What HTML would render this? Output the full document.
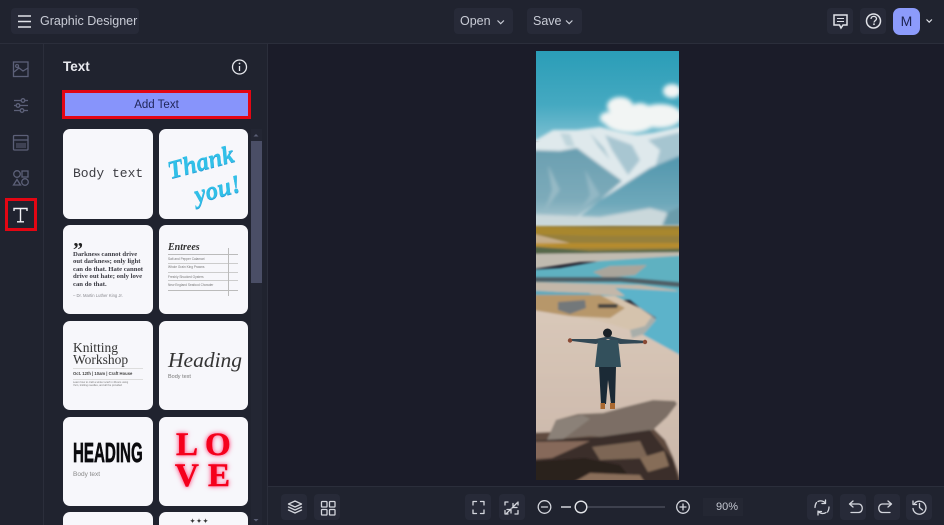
<!DOCTYPE html>
<html><head><meta charset="utf-8">
<style>
*{box-sizing:border-box}
html,body{margin:0;padding:0;width:944px;height:525px;overflow:hidden;background:#1b1c29;font-family:"Liberation Sans",sans-serif}
#root{position:absolute;left:0;top:0;width:944px;height:525px;overflow:hidden;background:#1b1c29}
.a{position:absolute}
.top{left:0;top:0;width:944px;height:44px;background:#20232f;border-bottom:1px solid #2b2e3b}
.rail{left:0;top:44px;width:44px;height:481px;background:#20232f;border-right:1px solid #2b2e3b}
.panel{left:44px;top:44px;width:224px;height:481px;background:#20232f;border-right:1px solid #2b2e3b}
.bot{left:268px;top:486px;width:676px;height:39px;background:#20232f;border-top:1px solid #2b2e3b}
.btn{background:#272a38;border-radius:4px;color:#c9ccd6;font-size:12.5px;line-height:26px}
.ib{background:#272a38;border-radius:4px;width:26px;height:26px}
.card{background:#f7f7fb;border-radius:7px;overflow:hidden}
svg{position:absolute;left:0;top:0;overflow:visible}
.t{position:absolute;white-space:nowrap;color:#333}
.lv{position:absolute;font:bold 33px/33px "Liberation Serif",serif;color:#f5001c;-webkit-text-stroke:.5px #f5001c;text-shadow:0 0 6px #ff5a8c,0 0 3px #ff6f9a}
</style></head><body><div id="root">
<div class="a top"></div><div class="a rail"></div><div class="a panel"></div><div class="a bot"></div>

<div class="a btn" style="left:11px;top:8px;width:128px;height:26px;padding-left:29px;font-size:12.5px">Graphic Designer</div>
<div class="a btn" style="left:454px;top:8px;width:59px;height:26px;padding-left:6px">Open</div>
<div class="a btn" style="left:527px;top:8px;width:55px;height:26px;padding-left:6px">Save</div>
<div class="a ib" style="left:827px;top:8px"></div>
<div class="a ib" style="left:860px;top:8px"></div>
<div class="a" style="left:893px;top:8px;width:27px;height:27px;border-radius:7px;background:#8c9bfb;color:#1d2450;font-size:14px;line-height:27px;text-align:center">M</div>

<div class="a" style="left:63px;top:59px;color:#e8e9ee;font-size:13.5px;font-weight:bold">Text</div>
<div class="a" style="left:62px;top:90px;width:189px;height:29px;background:#8794fb;border:3px solid #e30613;color:#1f2558;font-size:11.5px;line-height:25px;text-align:center">Add Text</div>
<div class="a" style="left:5px;top:198px;width:32px;height:33px;border:3px solid #e30613"></div>

<div class="a" style="left:251px;top:129px;width:11px;height:396px;background:#232633"></div>
<div class="a" style="left:251px;top:141px;width:11px;height:142px;background:#4a4e66"></div>

<!-- cards -->
<div class="a card" style="left:63px;top:129px;width:90px;height:90px"><div class="t" style="left:10px;top:37px;font:13px 'Liberation Mono',monospace;color:#3c3c42">Body text</div></div>
<div class="a card" style="left:159px;top:129px;width:89px;height:90px">
<div class="t" style="left:8px;top:20px;font:italic bold 25px 'Liberation Serif',serif;color:#31c0e8;transform:rotate(-15deg);text-shadow:0 1px 0 #2aa0d8">Thank</div>
<div class="t" style="left:35px;top:47px;font:italic bold 25px 'Liberation Serif',serif;color:#31c0e8;transform:rotate(-15deg);text-shadow:0 1px 0 #2aa0d8">you!</div></div>
<div class="a card" style="left:63px;top:225px;width:90px;height:89px">
<div class="t" style="left:10px;top:15px;font:bold 20px/20px 'Liberation Serif',serif;color:#222">”</div>
<div class="t" style="left:10px;top:26px;font:bold 6.7px/7.4px 'Liberation Serif',serif;color:#3c3c44">Darkness cannot drive<br>out darkness; only light<br>can do that. Hate cannot<br>drive out hate; only love<br>can do that.</div>
<div class="t" style="left:10px;top:68px;font:4.2px 'Liberation Sans',sans-serif;color:#8a8a90">– Dr. Martin Luther King Jr.</div></div>
<div class="a card" style="left:159px;top:225px;width:89px;height:89px">
<div class="t" style="left:9px;top:17px;font:italic bold 10px 'Liberation Serif',serif;color:#333">Entrees</div>
<div class="a" style="left:9px;top:29px;width:70px;height:1px;background:#bbb"></div>
<div class="a" style="left:9px;top:38px;width:70px;height:1px;background:#ccc"></div>
<div class="a" style="left:9px;top:47px;width:70px;height:1px;background:#ccc"></div>
<div class="a" style="left:9px;top:55px;width:70px;height:1px;background:#ccc"></div>
<div class="a" style="left:9px;top:65px;width:70px;height:1px;background:#bbb"></div>
<div class="a" style="left:69px;top:23px;width:1px;height:48px;background:#bbb"></div>
<div class="t" style="left:9px;top:32px;font:3.2px 'Liberation Sans',sans-serif;color:#777">Salt and Pepper Calamari</div>
<div class="t" style="left:9px;top:40px;font:3.2px 'Liberation Sans',sans-serif;color:#777">Whole Grain King Prawns</div>
<div class="t" style="left:9px;top:50px;font:3.2px 'Liberation Sans',sans-serif;color:#777">Freshly Shucked Oysters</div>
<div class="t" style="left:9px;top:58px;font:3.2px 'Liberation Sans',sans-serif;color:#777">New England Seafood Chowder</div></div>
<div class="a card" style="left:63px;top:321px;width:90px;height:89px">
<div class="t" style="left:10px;top:21px;font:13.5px/12px 'Liberation Serif',serif;color:#333">Knitting<br>Workshop</div>
<div class="a" style="left:10px;top:47px;width:70px;height:1px;background:#ddd"></div>
<div class="t" style="left:10px;top:50px;font:bold 4.2px 'Liberation Sans',sans-serif;color:#444">Oct. 12th | 10am | Craft House</div>
<div class="a" style="left:10px;top:58px;width:70px;height:1px;background:#ddd"></div>
<div class="t" style="left:10px;top:60px;font:2.6px/3.3px 'Liberation Sans',sans-serif;color:#777">Learn how to craft a winter scarf in 4hours using<br>Yarn, knitting needles, and all the provided</div></div>
<div class="a card" style="left:159px;top:321px;width:89px;height:89px">
<div class="t" style="left:9px;top:27px;font:italic 21.5px 'Liberation Serif',serif;color:#333">Heading</div>
<div class="t" style="left:9px;top:53px;font:5.5px 'Liberation Sans',sans-serif;color:#777">Body text</div></div>
<div class="a card" style="left:63px;top:417px;width:90px;height:89px">
<div class="t" style="left:10px;top:22px;font:bold 28px/28px 'Liberation Sans',sans-serif;color:#0b0b0e;-webkit-text-stroke:.7px #0b0b0e;transform:scaleX(.54);transform-origin:0 0">HEADING</div>
<div class="t" style="left:10px;top:54px;font:6.5px 'Liberation Sans',sans-serif;color:#888">Body text</div></div>
<div class="a card" style="left:159px;top:417px;width:89px;height:89px">
<div class="lv" style="left:17px;top:12px">L</div><div class="lv" style="left:46px;top:12px">O</div>
<div class="lv" style="left:16px;top:43px">V</div><div class="lv" style="left:49px;top:43px">E</div></div>
<div class="a card" style="left:63px;top:512px;width:90px;height:13px;border-radius:7px 7px 0 0"></div>
<div class="a card" style="left:159px;top:512px;width:89px;height:13px;border-radius:7px 7px 0 0"><div class="t" style="left:31px;top:6px;font:bold 6px 'Liberation Serif',serif">✦ ✦ ✦</div></div>

<!-- photo -->
<svg width="944" height="525" viewBox="0 0 944 525">
<defs>
<clipPath id="ph"><rect x="536" y="51" width="143" height="429"/></clipPath>
<linearGradient id="sky" x1="0" y1="0" x2="0" y2="1"><stop offset="0" stop-color="#2a9db7"/><stop offset=".6" stop-color="#45a9c1"/><stop offset="1" stop-color="#7fc0d2"/></linearGradient>
<linearGradient id="mt" x1="0" y1="0" x2="0" y2="1"><stop offset="0" stop-color="#6a9fb1"/><stop offset=".7" stop-color="#7dabba"/><stop offset="1" stop-color="#a9c7d0"/></linearGradient>
<linearGradient id="mr" x1="0" y1="0" x2="0" y2="1"><stop offset="0" stop-color="#4f95ac"/><stop offset=".7" stop-color="#6ea8ba"/><stop offset="1" stop-color="#9cc0cb"/></linearGradient>
<linearGradient id="bch" x1="0" y1="0" x2="0" y2="1"><stop offset="0" stop-color="#d9c8b9"/><stop offset="1" stop-color="#c9b5a8"/></linearGradient>
<filter id="b1" x="-5%" y="-5%" width="110%" height="110%"><feGaussianBlur stdDeviation="1"/></filter>
<filter id="b2" x="-20%" y="-20%" width="140%" height="140%"><feGaussianBlur stdDeviation="2"/></filter>
<filter id="b3" x="-5%" y="-5%" width="110%" height="110%"><feGaussianBlur stdDeviation="1.500"/></filter>
</defs>
<g clip-path="url(#ph)">
<rect x="536" y="51" width="143" height="90" fill="url(#sky)"/>
<g filter="url(#b3)">
<polygon points="526,142 536,140 553,130 577,130 600,127 620,132 637,135 653,133 679,127 689,127 689,228 526,228" fill="#dfe9ec"/>
<polygon points="605,135 612,150 628,175 640,160 632,145" fill="#a8c6d1"/>
<polygon points="648,140 689,130 689,152 655,168 660,150" fill="#a6c5d0"/>
<polygon points="590,133 598,146 610,160 604,148" fill="#a9c6d0"/>
<polygon points="560,133 566,146 575,147 570,134" fill="#bfd5dc"/>
<polygon points="526,150 560,151 577,148 600,165 622,181 600,200 570,222 526,222" fill="url(#mt)"/>
<polygon points="585,170 590,195 580,210 600,195" fill="#92b7c4"/>
<polygon points="548,165 552,190 544,212 560,190" fill="#95b9c5"/>
<polygon points="575,220 600,200 622,186 650,168 689,152 689,226 575,226" fill="url(#mr)"/>
<polygon points="526,214 600,217 650,208 665,212 689,226 526,230" fill="#cad8db"/>
<polygon points="662,226 668,212 689,203 689,226" fill="#6b9cab"/>
</g>
<g fill="#f2f5f4" filter="url(#b2)">
<ellipse cx="630" cy="120" rx="26" ry="13"/><ellipse cx="620" cy="106" rx="13" ry="9"/><ellipse cx="640" cy="111" rx="11" ry="8"/><ellipse cx="660" cy="116" rx="22" ry="12"/><ellipse cx="672" cy="91" rx="9" ry="7"/><ellipse cx="608" cy="118" rx="8" ry="6"/>
</g>
<g filter="url(#b1)">
<rect x="526" y="226" width="163" height="27" fill="#97803a"/>
<polygon points="526,226 600,229 689,229 689,236 600,236 526,234" fill="#a8872f"/>
<polygon points="526,232 570,243 526,247" fill="#c5ad89"/>
<rect x="526" y="243" width="163" height="5" fill="#bd8e2c" opacity=".8"/>
<polygon points="526,246 590,251 689,249 689,254 590,254 526,254" fill="#56684a"/>
<polygon points="526,254 689,252 689,258 580,262 526,270" fill="#c1bbb0"/>
<polygon points="560,268 600,261 689,255 689,300 526,300 526,270" fill="#5fb1c1"/>
<polygon points="593,272 610,266 647,265 635,275 605,278" fill="#a9a59b"/>
<polygon points="526,277 620,277 689,283 689,288 620,282 526,282" fill="#4f5f66"/>
<polygon points="526,282 640,285 675,290 689,296 620,296 526,290" fill="#c3b7a9"/>
<polygon points="526,291 590,293 590,296 526,296" fill="#5fa9bb"/>
<polygon points="615,288 689,292 689,362 640,345 640,325 656,318 640,308" fill="#5cb3ca"/>
<polygon points="526,296 615,296 640,308 655,318 645,330 526,330" fill="#d5c3ad"/>
<polygon points="526,295 600,295 625,308 610,318 526,314" fill="#b7976a"/>
<polygon points="558,302 585,300 586,308 570,314 558,310" fill="#73787a"/>
<polygon points="598,304 618,304 617,308 598,308" fill="#3d3f3d"/>
<polygon points="526,309 600,321 640,333 689,360 689,490 526,490" fill="url(#bch)"/>
<polygon points="630,330 645,326 652,316 656,320 644,334 632,338" fill="#a8aeaa"/>
<polygon points="526,433 552,432 600,425 650,425 665,440 673,457 681,480 689,490 526,490" fill="#614c40"/>
<polygon points="547,440 556,420 578,414 603,413 625,407 653,400 675,401 677,404 667,417 653,430 620,438 590,436" fill="#7b6e65"/>
<polygon points="547,440 556,420 582,415 590,419 562,440" fill="#8b8178"/>
<polygon points="526,441 600,437 650,430 662,446 673,460 681,490 526,490" fill="#3a2e29"/>
<polygon points="526,442 590,441 552,458 526,460" fill="#86695a"/>
<polygon points="592,447 640,441 648,458 600,460" fill="#7d6655"/>
<polygon points="640,458 664,451 669,466 648,472" fill="#866d59"/>
<polygon points="526,462 585,458 620,465 640,490 526,490" fill="#2a211f"/>
<polygon points="560,490 590,473 640,475 650,490" fill="#8a6e5a"/>
</g>
<!-- person -->
<g>
<path d="M568 340.500L596 344L608 339L620 344L647 343L647 341L622 339L610 336L596 339L570 339Z" fill="#324855"/>
<circle cx="607.500" cy="333" r="4.500" fill="#1a2026"/>
<circle cx="570" cy="340.500" r="2.200" fill="#8a4a35"/>
<circle cx="645" cy="342" r="2.200" fill="#8a4a35"/>
<path d="M598 340L618 340L621 367L595 367Z" fill="#33505c"/>
<path d="M599 367L616 367L615 404L611 404L608 380L606 404L601 404Z" fill="#1b2a36"/>
<rect x="600.500" y="403" width="4.500" height="6" fill="#a9682f"/>
<rect x="610" y="403" width="5" height="6" fill="#a9682f"/>
</g>
</g>

<!-- top icons -->
<g stroke="#e0e2e8" stroke-width="1.500" fill="none">
<path d="M18 16H31M18 21.500H31M18 27H31"/>
<path d="M497.500 20.500l3.200 3.200 3.200-3.200M566 20.500l3.200 3.200 3.200-3.200" stroke="#c9ccd6" stroke-width="1.200"/>
<path d="M834 15H847V25H843L841 28 839.500 25H834Z"/><path d="M837 18.500H844M837 21.500H844" stroke-width="1.100"/>
<circle cx="873.500" cy="21" r="7"/>
<path d="M871 19c0-3.500 5.500-3.500 5.500-.2 0 2-2.500 1.800-2.500 3.700" stroke-width="1.300"/>
<path d="M926.500 19.500l2.700 2.700 2.700-2.700" stroke-width="1.200"/>
</g>
<circle cx="874" cy="24.200" r=".9" fill="#e0e2e8"/>

<!-- rail icons -->
<g stroke="#5c6078" stroke-width="1.300" fill="none">
<rect x="13.500" y="62" width="14.500" height="14.500"/>
<path d="M14 72l5-4 4 3 5-3M17 64.500a1.500 1.500 0 1 0 .1 0"/>
<path d="M14 100.500H28M14 105.500H28M14 110.500H28"/>
<circle cx="23" cy="100.500" r="1.800" fill="#20232f"/><circle cx="18" cy="105.500" r="1.800" fill="#20232f"/><circle cx="22" cy="110.500" r="1.800" fill="#20232f"/>
<rect x="13.500" y="135.500" width="14.500" height="14.500" rx="1"/><path d="M14 140H28"/><rect x="16" y="143" width="10" height="5" fill="#5c6078" opacity=".5" stroke="none"/>
<circle cx="17" cy="174" r="3.300"/><rect x="22" y="171" width="6" height="6"/><path d="M17 179.500l3.500 5.500H13.500Z"/><circle cx="25" cy="182" r="3.300"/>
</g>
<g stroke="#f1f2f5" stroke-width="1.400" fill="none">
<path d="M14 211V208.500H27V211M20.500 208.500V221.500M17 221.800H24"/>
</g>
<!-- info -->
<g stroke="#e8e9ee" stroke-width="1.300" fill="none"><circle cx="239.500" cy="67" r="7"/><path d="M239.500 66V71"/></g>
<circle cx="239.500" cy="63.500" r=".9" fill="#e8e9ee"/>
<!-- scroll arrows -->
<path d="M253.500 136.500l2.500-2.500 2.500 2.500Z" fill="#5b5f75"/>
<path d="M253.500 519l2.500 2.500 2.500-2.500Z" fill="#5b5f75"/>
</svg>

<!-- bottom buttons -->
<div class="a ib" style="left:281px;top:494px"></div>
<div class="a ib" style="left:314px;top:494px"></div>
<div class="a ib" style="left:465px;top:494px"></div>
<div class="a ib" style="left:499px;top:494px"></div>
<div class="a ib" style="left:807px;top:494px"></div>
<div class="a ib" style="left:840px;top:494px"></div>
<div class="a ib" style="left:874px;top:494px"></div>
<div class="a ib" style="left:906px;top:494px"></div>
<div class="a" style="left:703px;top:498px;width:40px;height:18px;background:#242733;color:#c3c6d0;font-size:11px;line-height:18px;text-align:right;padding-right:5px">90%</div>

<svg width="944" height="525" viewBox="0 0 944 525">
<g stroke="#d4d6dd" stroke-width="1.300" fill="none" stroke-linejoin="round" stroke-linecap="round">
<path d="M295 501l6.500 3-6.500 3-6.500-3ZM288.500 507l6.500 3 6.500-3M288.500 510l6.500 3 6.500-3"/>
<rect x="321.500" y="501.500" width="5.500" height="5.500" rx=".8"/><rect x="329.500" y="501.500" width="5.500" height="5.500" rx=".8"/><rect x="321.500" y="509.500" width="5.500" height="5.500" rx=".8"/><rect x="329.500" y="509.500" width="5.500" height="5.500" rx=".8"/>
<path d="M473 505V501.500H476.500M480.500 501.500H484V505M484 510V513.500H480.500M476.500 513.500H473V510"/>
<path d="M505 505V502H508M518 502V505M515 514H518V510.500M505 510.500V514H508M512 508L517 503M513 503.500V507.500H517M511 509L506.500 513.500M507 509.500H511V513"/>
<circle cx="544.500" cy="507" r="6.300"/><path d="M541.500 507H547.500"/>
<circle cx="683" cy="507" r="6.300"/><path d="M680 507H686M683 504V510"/>
<path d="M818 501.500c2-1 6-1 7.500 2M825.500 500v3.500H822M826 512.500c-2 1.500-6 1.500-8-1.500M818 515v-3.500H821.500M815 507.500c0-2 .5-3.500 1.500-5M829 507c0 2-.5 3.500-1.500 5"/>
<path d="M850 504H858.500c5 0 5 8.500 0 8.500H851M853 501l-3.500 3 3.500 3"/>
<path d="M891 504H882.500c-5 0-5 8.500 0 8.500H890M888 501l3.500 3-3.500 3"/>
<path d="M914.500 503.500a6.500 6.500 0 1 1-1.500 5M913 501v3.500h3.500M919.500 503.500V507.500L922.500 510"/>
</g>
<path d="M561 507H571" stroke="#e0e2e8" stroke-width="1.400"/>
<path d="M587 507H665" stroke="#5c5f6e" stroke-width="1"/>
<circle cx="581" cy="507" r="5.800" fill="#20232f" stroke="#e4e6ea" stroke-width="1.400"/>
</svg>
</div></body></html>
